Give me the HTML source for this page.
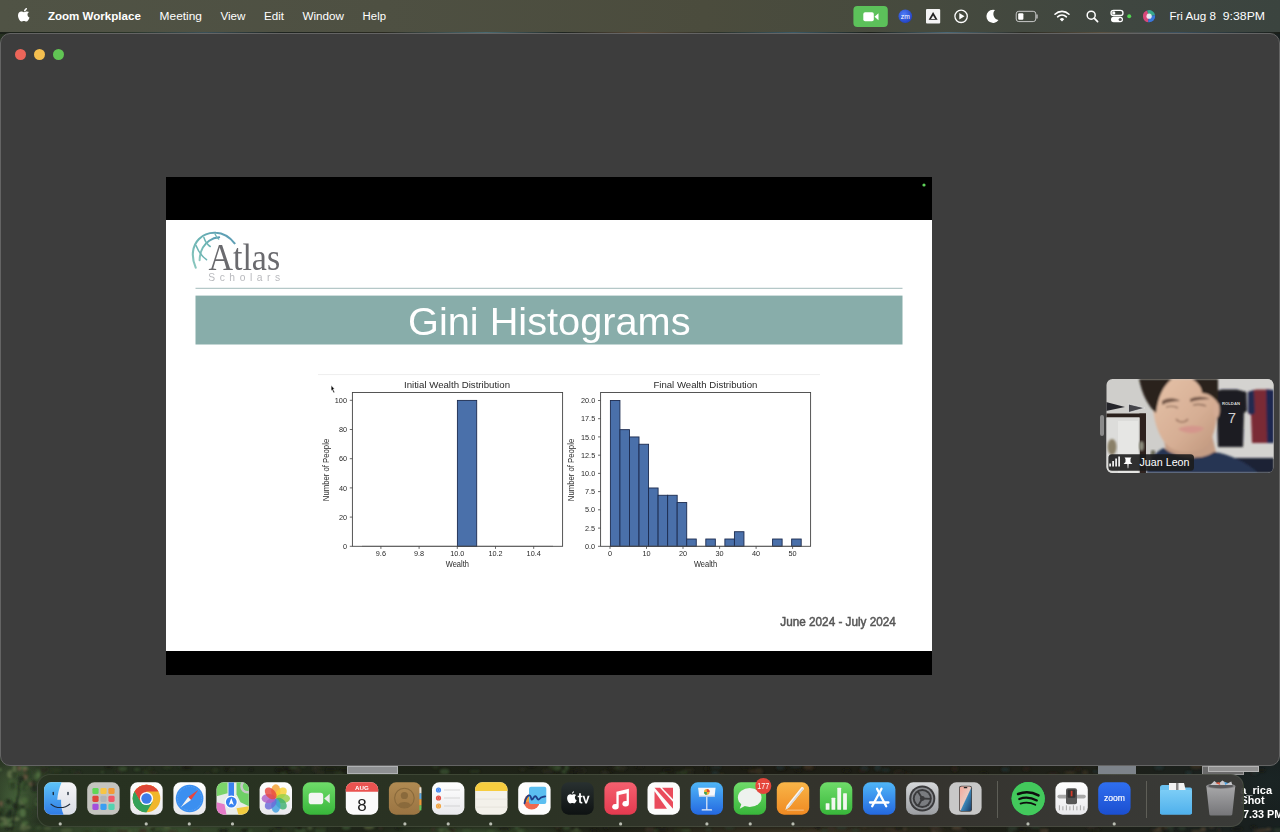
<!DOCTYPE html>
<html><head><meta charset="utf-8">
<style>
*{margin:0;padding:0;box-sizing:border-box}
html,body{width:1280px;height:832px;overflow:hidden;font-family:"Liberation Sans",sans-serif}
body{position:relative;background:#1d2618}
.abs{position:absolute}
#wall{left:0;top:0;width:1280px;height:832px;
 background:
 radial-gradient(ellipse 30px 40px at 15px 800px,#45603a 0%,rgba(60,85,50,0.6) 50%,transparent 100%),
 radial-gradient(ellipse 40px 30px at 20px 780px,#3a4a30 0%,transparent 100%),
 radial-gradient(ellipse 200px 10px at 150px 830px,#3a5030 0%,transparent 100%),
 radial-gradient(ellipse 120px 8px at 480px 832px,#34462c 0%,transparent 100%),
 radial-gradient(ellipse 200px 8px at 800px 832px,#3a3424 0%,transparent 100%),
 radial-gradient(ellipse 60px 30px at 1270px 780px,#1a2424 0%,transparent 100%),
 linear-gradient(90deg,#253020,#1e2418 30%,#1c1c14 60%,#1e2018 85%,#182020)}
#menubar{left:0;top:0;width:1280px;height:32px;background:linear-gradient(90deg,#505345 0%,#4e5042 30%,#4b4c3d 55%,#464a3e 72%,#3f4640 88%,#3b443f 100%);color:#fff;font-size:13px}
#menubar span{position:absolute;top:9px;line-height:14px;white-space:nowrap}
#win{left:0;top:33px;width:1280px;height:733px;background:#3d3d3d;border:1px solid #646464;border-radius:10px}
.tl{position:absolute;top:14.6px;width:11px;height:11px;border-radius:50%}
#slide{left:166px;top:177px;width:766px;height:498px;background:#000}
#white{left:166px;top:220px;width:766px;height:431px;background:#fff}
</style></head><body>
<div id="wall" class="abs"></div>
<svg class="abs" style="left:0;top:0" width="1280" height="832"><defs><filter id="wb"><feGaussianBlur stdDeviation="0.8"/></filter></defs><g filter="url(#wb)"><ellipse cx="9.5" cy="801.9" rx="3.8" ry="2.7" fill="#2a3a22" opacity="0.7"/><ellipse cx="23.2" cy="806.0" rx="2.7" ry="2.9" fill="#1a2418" opacity="0.7"/><ellipse cx="7.7" cy="813.3" rx="3.6" ry="2.7" fill="#3a5030" opacity="0.7"/><ellipse cx="25.6" cy="775.9" rx="1.9" ry="3.8" fill="#7a5a48" opacity="0.7"/><ellipse cx="15.6" cy="767.0" rx="1.7" ry="3.4" fill="#1a2418" opacity="0.7"/><ellipse cx="23.6" cy="785.9" rx="3.6" ry="2.2" fill="#4a6a3a" opacity="0.7"/><ellipse cx="23.8" cy="826.7" rx="3.3" ry="3.8" fill="#6a7a50" opacity="0.7"/><ellipse cx="15.8" cy="818.9" rx="3.9" ry="1.8" fill="#6a7a50" opacity="0.7"/><ellipse cx="14.6" cy="768.4" rx="2.0" ry="3.9" fill="#6a7a50" opacity="0.7"/><ellipse cx="17.4" cy="807.4" rx="2.6" ry="3.6" fill="#2a3a22" opacity="0.7"/><ellipse cx="23.0" cy="801.3" rx="3.0" ry="3.8" fill="#6a7a50" opacity="0.7"/><ellipse cx="27.3" cy="827.3" rx="2.2" ry="3.0" fill="#1a2418" opacity="0.7"/><ellipse cx="27.8" cy="812.1" rx="3.9" ry="3.8" fill="#2a3a22" opacity="0.7"/><ellipse cx="22.8" cy="813.1" rx="3.1" ry="4.0" fill="#5a7a48" opacity="0.7"/><ellipse cx="10.7" cy="774.2" rx="3.6" ry="4.0" fill="#6a7a50" opacity="0.7"/><ellipse cx="3.5" cy="818.8" rx="3.7" ry="1.6" fill="#6a7a50" opacity="0.7"/><ellipse cx="17.1" cy="793.4" rx="1.6" ry="3.0" fill="#4a6a3a" opacity="0.7"/><ellipse cx="1.8" cy="813.4" rx="2.9" ry="3.8" fill="#2a3a22" opacity="0.7"/><ellipse cx="11.2" cy="781.6" rx="2.3" ry="1.7" fill="#4a6a3a" opacity="0.7"/><ellipse cx="24.0" cy="768.1" rx="3.9" ry="2.2" fill="#5a7a48" opacity="0.7"/><ellipse cx="10.5" cy="811.5" rx="2.3" ry="2.4" fill="#1a2418" opacity="0.7"/><ellipse cx="5.5" cy="822.9" rx="2.7" ry="2.8" fill="#6a7a50" opacity="0.7"/><ellipse cx="25.8" cy="805.3" rx="1.8" ry="3.9" fill="#3a5030" opacity="0.7"/><ellipse cx="32.5" cy="783.9" rx="3.3" ry="2.1" fill="#7a5a48" opacity="0.7"/><ellipse cx="12.0" cy="830.5" rx="2.3" ry="2.3" fill="#3a5030" opacity="0.7"/><ellipse cx="31.5" cy="831.2" rx="1.6" ry="3.0" fill="#2a3a22" opacity="0.7"/><ellipse cx="25.3" cy="770.0" rx="2.3" ry="2.4" fill="#7a5a48" opacity="0.7"/><ellipse cx="36.7" cy="806.2" rx="3.3" ry="1.6" fill="#2a3a22" opacity="0.7"/><ellipse cx="2.4" cy="810.6" rx="2.1" ry="2.6" fill="#2a3a22" opacity="0.7"/><ellipse cx="23.7" cy="787.1" rx="2.0" ry="3.4" fill="#2a3a22" opacity="0.7"/><ellipse cx="33.8" cy="783.4" rx="2.4" ry="3.4" fill="#1a2418" opacity="0.7"/><ellipse cx="1.1" cy="803.6" rx="1.8" ry="2.8" fill="#7a5a48" opacity="0.7"/><ellipse cx="26.1" cy="783.8" rx="2.0" ry="2.6" fill="#2a3a22" opacity="0.7"/><ellipse cx="27.9" cy="772.7" rx="3.9" ry="3.2" fill="#2a3a22" opacity="0.7"/><ellipse cx="9.0" cy="819.4" rx="1.7" ry="3.4" fill="#5a7a48" opacity="0.7"/><ellipse cx="8.7" cy="803.5" rx="2.1" ry="1.8" fill="#2a3a22" opacity="0.7"/><ellipse cx="21.2" cy="778.6" rx="3.6" ry="2.9" fill="#1a2418" opacity="0.7"/><ellipse cx="34.5" cy="788.4" rx="3.1" ry="3.5" fill="#1a2418" opacity="0.7"/><ellipse cx="13.8" cy="774.6" rx="2.8" ry="3.6" fill="#2a3a22" opacity="0.7"/><ellipse cx="18.6" cy="807.9" rx="2.5" ry="2.5" fill="#2a3a22" opacity="0.7"/><ellipse cx="36.8" cy="776.3" rx="2.7" ry="3.6" fill="#4a6a3a" opacity="0.7"/><ellipse cx="24.9" cy="799.7" rx="3.9" ry="3.8" fill="#3a5030" opacity="0.7"/><ellipse cx="8.9" cy="815.2" rx="3.4" ry="3.4" fill="#1a2418" opacity="0.7"/><ellipse cx="38.5" cy="801.9" rx="3.7" ry="3.6" fill="#5a7a48" opacity="0.7"/><ellipse cx="38.8" cy="773.9" rx="1.6" ry="3.8" fill="#5a7a48" opacity="0.7"/><ellipse cx="27.7" cy="827.0" rx="2.9" ry="1.5" fill="#6a7a50" opacity="0.7"/><ellipse cx="29.8" cy="777.3" rx="2.1" ry="1.5" fill="#2a3a22" opacity="0.7"/><ellipse cx="21.5" cy="769.5" rx="1.8" ry="1.8" fill="#3a5030" opacity="0.7"/><ellipse cx="38.9" cy="801.7" rx="3.5" ry="2.4" fill="#1a2418" opacity="0.7"/><ellipse cx="7.9" cy="801.3" rx="1.8" ry="2.1" fill="#1a2418" opacity="0.7"/><ellipse cx="11.0" cy="824.7" rx="3.6" ry="1.5" fill="#5a7a48" opacity="0.7"/><ellipse cx="25.1" cy="822.9" rx="3.4" ry="2.1" fill="#4a6a3a" opacity="0.7"/><ellipse cx="24.7" cy="800.3" rx="2.7" ry="3.4" fill="#4a6a3a" opacity="0.7"/><ellipse cx="0.1" cy="769.6" rx="1.6" ry="1.6" fill="#5a7a48" opacity="0.7"/><ellipse cx="19.3" cy="768.2" rx="1.7" ry="2.8" fill="#7a5a48" opacity="0.7"/><ellipse cx="12.6" cy="786.8" rx="2.5" ry="2.5" fill="#2a3a22" opacity="0.7"/><ellipse cx="12.2" cy="783.5" rx="2.6" ry="1.8" fill="#2a3a22" opacity="0.7"/><ellipse cx="0.1" cy="813.7" rx="1.7" ry="1.9" fill="#1a2418" opacity="0.7"/><ellipse cx="14.9" cy="805.9" rx="2.9" ry="3.1" fill="#1a2418" opacity="0.7"/><ellipse cx="1.7" cy="824.5" rx="2.4" ry="2.7" fill="#4a6a3a" opacity="0.7"/><ellipse cx="899.7" cy="829.1" rx="3.8" ry="1.4" fill="#2a3a2a" opacity="0.8"/><ellipse cx="685.9" cy="830.5" rx="5.2" ry="1.3" fill="#3a5030" opacity="0.8"/><ellipse cx="166.9" cy="827.1" rx="3.5" ry="2.3" fill="#4a5a38" opacity="0.8"/><ellipse cx="1012.4" cy="828.3" rx="4.8" ry="2.4" fill="#2a3a2a" opacity="0.8"/><ellipse cx="936.4" cy="831.2" rx="5.2" ry="2.0" fill="#4a4030" opacity="0.8"/><ellipse cx="939.2" cy="829.8" rx="5.2" ry="2.1" fill="#2a2820" opacity="0.8"/><ellipse cx="606.1" cy="828.2" rx="2.2" ry="1.1" fill="#1a1a14" opacity="0.8"/><ellipse cx="127.1" cy="831.4" rx="5.3" ry="1.5" fill="#2a3a22" opacity="0.8"/><ellipse cx="1090.9" cy="827.1" rx="4.7" ry="2.3" fill="#2a2820" opacity="0.8"/><ellipse cx="1219.1" cy="829.9" rx="2.1" ry="2.2" fill="#2a2820" opacity="0.8"/><ellipse cx="654.5" cy="830.6" rx="4.2" ry="1.1" fill="#3a5030" opacity="0.8"/><ellipse cx="708.2" cy="829.8" rx="2.7" ry="1.1" fill="#4a4030" opacity="0.8"/><ellipse cx="1277.9" cy="830.2" rx="4.5" ry="2.1" fill="#2a3a2a" opacity="0.8"/><ellipse cx="504.0" cy="828.8" rx="5.8" ry="1.8" fill="#1a1a14" opacity="0.8"/><ellipse cx="1236.9" cy="828.9" rx="5.9" ry="1.6" fill="#1a1a14" opacity="0.8"/><ellipse cx="956.7" cy="827.8" rx="5.0" ry="2.0" fill="#4a4030" opacity="0.8"/><ellipse cx="661.9" cy="829.4" rx="5.6" ry="1.2" fill="#1a1a14" opacity="0.8"/><ellipse cx="122.7" cy="830.7" rx="5.8" ry="1.9" fill="#3a3024" opacity="0.8"/><ellipse cx="1098.4" cy="827.7" rx="2.6" ry="1.8" fill="#1a1a14" opacity="0.8"/><ellipse cx="1196.5" cy="831.3" rx="5.8" ry="1.4" fill="#4a4030" opacity="0.8"/><ellipse cx="902.8" cy="829.1" rx="4.3" ry="1.4" fill="#4a4030" opacity="0.8"/><ellipse cx="278.5" cy="827.1" rx="5.2" ry="1.3" fill="#1a1a14" opacity="0.8"/><ellipse cx="729.5" cy="828.2" rx="5.1" ry="1.2" fill="#2a3a2a" opacity="0.8"/><ellipse cx="1268.8" cy="829.4" rx="2.8" ry="1.9" fill="#4a4030" opacity="0.8"/><ellipse cx="1154.2" cy="830.3" rx="3.9" ry="2.1" fill="#2a2820" opacity="0.8"/><ellipse cx="1096.5" cy="829.0" rx="3.9" ry="1.3" fill="#2a2820" opacity="0.8"/><ellipse cx="300.5" cy="830.6" rx="5.8" ry="2.3" fill="#3a5030" opacity="0.8"/><ellipse cx="309.9" cy="827.9" rx="2.5" ry="1.9" fill="#4a5a38" opacity="0.8"/><ellipse cx="864.2" cy="827.2" rx="2.7" ry="1.1" fill="#3a3024" opacity="0.8"/><ellipse cx="234.6" cy="827.5" rx="2.5" ry="1.4" fill="#3a5030" opacity="0.8"/><ellipse cx="1169.6" cy="827.2" rx="4.3" ry="2.0" fill="#2a3a2a" opacity="0.8"/><ellipse cx="8.8" cy="828.7" rx="3.5" ry="1.1" fill="#1a1a14" opacity="0.8"/><ellipse cx="824.7" cy="830.7" rx="3.6" ry="1.8" fill="#2a3a2a" opacity="0.8"/><ellipse cx="152.5" cy="828.4" rx="2.5" ry="2.3" fill="#1a1a14" opacity="0.8"/><ellipse cx="1163.2" cy="827.5" rx="4.7" ry="1.6" fill="#3a3024" opacity="0.8"/><ellipse cx="576.5" cy="830.3" rx="2.4" ry="2.4" fill="#4a5a38" opacity="0.8"/><ellipse cx="433.3" cy="829.8" rx="2.5" ry="1.7" fill="#3a3024" opacity="0.8"/><ellipse cx="450.8" cy="830.6" rx="5.0" ry="2.0" fill="#3a3024" opacity="0.8"/><ellipse cx="934.7" cy="827.7" rx="5.6" ry="2.0" fill="#3a3024" opacity="0.8"/><ellipse cx="157.6" cy="831.7" rx="5.7" ry="2.0" fill="#2a3a22" opacity="0.8"/><ellipse cx="831.5" cy="829.1" rx="4.6" ry="1.7" fill="#3a3024" opacity="0.8"/><ellipse cx="399.9" cy="827.9" rx="2.4" ry="1.3" fill="#3a5030" opacity="0.8"/><ellipse cx="708.8" cy="829.9" rx="3.4" ry="1.4" fill="#2a3a2a" opacity="0.8"/><ellipse cx="490.7" cy="831.4" rx="3.9" ry="1.4" fill="#3a5030" opacity="0.8"/><ellipse cx="890.2" cy="829.6" rx="5.8" ry="1.7" fill="#3a3024" opacity="0.8"/><ellipse cx="1035.7" cy="827.3" rx="5.4" ry="1.2" fill="#2a3a2a" opacity="0.8"/><ellipse cx="346.2" cy="827.5" rx="4.3" ry="2.4" fill="#3a5030" opacity="0.8"/><ellipse cx="143.5" cy="830.5" rx="3.7" ry="2.1" fill="#3a3024" opacity="0.8"/><ellipse cx="1044.2" cy="830.7" rx="4.4" ry="2.3" fill="#4a4030" opacity="0.8"/><ellipse cx="1021.7" cy="829.7" rx="4.3" ry="1.3" fill="#1a1a14" opacity="0.8"/><ellipse cx="320.2" cy="830.9" rx="5.4" ry="1.7" fill="#3a5030" opacity="0.8"/><ellipse cx="521.3" cy="831.1" rx="4.2" ry="1.9" fill="#4a5a38" opacity="0.8"/><ellipse cx="811.1" cy="831.9" rx="5.6" ry="2.0" fill="#3a3024" opacity="0.8"/><ellipse cx="38.6" cy="828.0" rx="2.4" ry="2.1" fill="#3a5030" opacity="0.8"/><ellipse cx="299.3" cy="827.9" rx="2.8" ry="2.2" fill="#1a1a14" opacity="0.8"/><ellipse cx="271.2" cy="831.1" rx="2.4" ry="1.4" fill="#1a1a14" opacity="0.8"/><ellipse cx="841.6" cy="827.8" rx="5.2" ry="1.9" fill="#2a3a2a" opacity="0.8"/><ellipse cx="64.8" cy="828.8" rx="4.0" ry="1.7" fill="#2a3a22" opacity="0.8"/><ellipse cx="24.2" cy="828.7" rx="5.5" ry="2.0" fill="#4a5a38" opacity="0.8"/><ellipse cx="172.0" cy="831.3" rx="5.1" ry="1.1" fill="#3a3024" opacity="0.8"/><ellipse cx="102.4" cy="832.0" rx="5.7" ry="2.3" fill="#2a3a22" opacity="0.8"/><ellipse cx="559.4" cy="830.8" rx="3.3" ry="2.2" fill="#1a1a14" opacity="0.8"/><ellipse cx="522.8" cy="831.2" rx="3.6" ry="1.7" fill="#2a3a22" opacity="0.8"/><ellipse cx="87.0" cy="831.3" rx="4.6" ry="1.5" fill="#2a3a22" opacity="0.8"/><ellipse cx="594.4" cy="830.8" rx="3.8" ry="1.7" fill="#1a1a14" opacity="0.8"/><ellipse cx="47.7" cy="828.3" rx="3.8" ry="1.5" fill="#4a5a38" opacity="0.8"/><ellipse cx="514.3" cy="831.8" rx="3.0" ry="1.6" fill="#2a3a22" opacity="0.8"/><ellipse cx="1094.9" cy="829.7" rx="2.8" ry="1.3" fill="#1a1a14" opacity="0.8"/><ellipse cx="516.8" cy="827.8" rx="2.6" ry="1.9" fill="#3a5030" opacity="0.8"/><ellipse cx="566.7" cy="827.9" rx="3.6" ry="1.5" fill="#3a5030" opacity="0.8"/><ellipse cx="42.0" cy="830.6" rx="3.6" ry="1.6" fill="#2a3a22" opacity="0.8"/><ellipse cx="34.1" cy="831.8" rx="3.0" ry="1.6" fill="#2a3a22" opacity="0.8"/><ellipse cx="244.0" cy="828.7" rx="3.4" ry="1.2" fill="#3a5030" opacity="0.8"/><ellipse cx="66.4" cy="830.6" rx="5.9" ry="2.4" fill="#4a5a38" opacity="0.8"/><ellipse cx="1010.3" cy="831.8" rx="3.0" ry="1.4" fill="#2a3a2a" opacity="0.8"/><ellipse cx="1042.8" cy="830.1" rx="3.3" ry="1.1" fill="#3a3024" opacity="0.8"/><ellipse cx="557.3" cy="827.4" rx="2.0" ry="1.0" fill="#3a3024" opacity="0.8"/><ellipse cx="115.9" cy="827.9" rx="3.9" ry="1.3" fill="#3a5030" opacity="0.8"/><ellipse cx="652.5" cy="828.7" rx="3.4" ry="1.7" fill="#1a1a14" opacity="0.8"/><ellipse cx="450.0" cy="830.3" rx="3.2" ry="1.9" fill="#1a1a14" opacity="0.8"/><ellipse cx="1211.6" cy="827.4" rx="2.7" ry="1.6" fill="#3a3024" opacity="0.8"/><ellipse cx="649.6" cy="829.7" rx="4.7" ry="2.4" fill="#3a3024" opacity="0.8"/><ellipse cx="223.5" cy="830.7" rx="5.3" ry="1.8" fill="#1a1a14" opacity="0.8"/><ellipse cx="1182.1" cy="828.8" rx="3.8" ry="1.7" fill="#2a3a2a" opacity="0.8"/><ellipse cx="899.5" cy="828.7" rx="4.0" ry="2.1" fill="#1a1a14" opacity="0.8"/><ellipse cx="1171.3" cy="830.5" rx="2.2" ry="1.3" fill="#2a3a2a" opacity="0.8"/><ellipse cx="962.1" cy="831.1" rx="5.0" ry="2.0" fill="#2a2820" opacity="0.8"/><ellipse cx="124.3" cy="828.2" rx="5.5" ry="2.3" fill="#3a5030" opacity="0.8"/><ellipse cx="575.9" cy="831.5" rx="6.0" ry="1.0" fill="#4a5a38" opacity="0.8"/><ellipse cx="249.4" cy="830.9" rx="3.4" ry="1.5" fill="#3a5030" opacity="0.8"/><ellipse cx="576.4" cy="831.1" rx="3.0" ry="1.1" fill="#2a3a22" opacity="0.8"/><ellipse cx="195.4" cy="830.2" rx="5.9" ry="1.2" fill="#3a3024" opacity="0.8"/><ellipse cx="368.0" cy="828.0" rx="4.1" ry="1.8" fill="#3a3024" opacity="0.8"/><ellipse cx="1161.2" cy="828.6" rx="5.1" ry="1.7" fill="#4a4030" opacity="0.8"/><ellipse cx="796.7" cy="827.2" rx="4.4" ry="2.3" fill="#2a2820" opacity="0.8"/><ellipse cx="129.8" cy="831.7" rx="2.3" ry="1.7" fill="#4a5a38" opacity="0.8"/><ellipse cx="285.1" cy="831.1" rx="2.4" ry="1.7" fill="#3a3024" opacity="0.8"/><ellipse cx="855.7" cy="830.5" rx="4.4" ry="1.7" fill="#2a3a2a" opacity="0.8"/><ellipse cx="142.0" cy="831.2" rx="3.8" ry="1.6" fill="#3a3024" opacity="0.8"/><ellipse cx="149.7" cy="827.0" rx="4.9" ry="1.1" fill="#4a5a38" opacity="0.8"/><ellipse cx="443.1" cy="829.4" rx="5.7" ry="2.0" fill="#3a5030" opacity="0.8"/><ellipse cx="466.7" cy="830.9" rx="4.4" ry="1.3" fill="#3a5030" opacity="0.8"/><ellipse cx="448.7" cy="832.0" rx="2.9" ry="1.7" fill="#4a5a38" opacity="0.8"/><ellipse cx="321.2" cy="828.6" rx="4.9" ry="2.3" fill="#2a3a22" opacity="0.8"/><ellipse cx="1262.8" cy="830.1" rx="5.4" ry="1.6" fill="#4a4030" opacity="0.8"/><ellipse cx="244.7" cy="830.1" rx="3.9" ry="2.2" fill="#1a1a14" opacity="0.8"/><ellipse cx="520.9" cy="832.0" rx="3.2" ry="2.4" fill="#3a5030" opacity="0.8"/><ellipse cx="236.3" cy="827.5" rx="3.2" ry="1.8" fill="#2a3a22" opacity="0.8"/><ellipse cx="818.2" cy="827.2" rx="3.1" ry="1.6" fill="#1a1a14" opacity="0.8"/><ellipse cx="441.3" cy="830.7" rx="2.6" ry="1.7" fill="#4a5a38" opacity="0.8"/><ellipse cx="1162.8" cy="829.2" rx="2.6" ry="2.1" fill="#1a1a14" opacity="0.8"/><ellipse cx="896.5" cy="831.9" rx="5.8" ry="1.6" fill="#3a3024" opacity="0.8"/><ellipse cx="1203.2" cy="829.4" rx="2.9" ry="2.4" fill="#4a4030" opacity="0.8"/><ellipse cx="369.2" cy="827.1" rx="5.5" ry="2.2" fill="#4a5a38" opacity="0.8"/><ellipse cx="380.7" cy="828.2" rx="2.0" ry="1.2" fill="#3a3024" opacity="0.8"/><ellipse cx="679.5" cy="829.7" rx="5.8" ry="1.0" fill="#2a3a22" opacity="0.8"/><ellipse cx="1259.1" cy="831.0" rx="5.9" ry="2.2" fill="#3a3024" opacity="0.8"/><ellipse cx="1253.4" cy="827.2" rx="3.0" ry="1.4" fill="#1a1a14" opacity="0.8"/><ellipse cx="1157.7" cy="831.2" rx="4.2" ry="1.1" fill="#4a4030" opacity="0.8"/><ellipse cx="398.9" cy="828.2" rx="3.7" ry="1.4" fill="#1a1a14" opacity="0.8"/><ellipse cx="56.3" cy="769.9" rx="5.7" ry="2.6" fill="#2a3a22" opacity="0.8"/><ellipse cx="316.6" cy="767.2" rx="4.0" ry="2.7" fill="#2a2a20" opacity="0.8"/><ellipse cx="706.4" cy="768.5" rx="2.2" ry="2.0" fill="#1a1a14" opacity="0.8"/><ellipse cx="77.3" cy="773.3" rx="3.9" ry="2.3" fill="#2a2a20" opacity="0.8"/><ellipse cx="1188.6" cy="773.3" rx="3.5" ry="2.3" fill="#223030" opacity="0.8"/><ellipse cx="376.0" cy="766.7" rx="6.0" ry="2.1" fill="#2a3a22" opacity="0.8"/><ellipse cx="522.4" cy="769.2" rx="3.1" ry="1.5" fill="#2a2a20" opacity="0.8"/><ellipse cx="362.3" cy="770.8" rx="2.6" ry="1.1" fill="#1a1a14" opacity="0.8"/><ellipse cx="621.5" cy="768.1" rx="5.7" ry="2.2" fill="#2a2a20" opacity="0.8"/><ellipse cx="39.2" cy="771.2" rx="4.0" ry="1.6" fill="#3a5030" opacity="0.8"/><ellipse cx="908.0" cy="774.2" rx="3.7" ry="1.2" fill="#2a2218" opacity="0.8"/><ellipse cx="43.1" cy="770.4" rx="2.8" ry="2.8" fill="#2a2a20" opacity="0.8"/><ellipse cx="231.8" cy="769.4" rx="3.3" ry="1.5" fill="#2a2a20" opacity="0.8"/><ellipse cx="1215.9" cy="774.5" rx="4.4" ry="2.1" fill="#3a2e22" opacity="0.8"/><ellipse cx="45.5" cy="769.8" rx="5.9" ry="1.2" fill="#2a2a20" opacity="0.8"/><ellipse cx="294.1" cy="767.8" rx="4.8" ry="1.2" fill="#3a5030" opacity="0.8"/><ellipse cx="809.3" cy="767.1" rx="5.8" ry="2.9" fill="#2a2218" opacity="0.8"/><ellipse cx="885.8" cy="769.9" rx="3.8" ry="1.6" fill="#223030" opacity="0.8"/><ellipse cx="716.2" cy="767.6" rx="5.8" ry="1.3" fill="#223030" opacity="0.8"/><ellipse cx="1159.0" cy="767.6" rx="4.7" ry="2.3" fill="#223030" opacity="0.8"/><ellipse cx="182.0" cy="766.5" rx="3.2" ry="2.3" fill="#2a3a22" opacity="0.8"/><ellipse cx="167.4" cy="767.3" rx="4.1" ry="1.8" fill="#2a3a22" opacity="0.8"/><ellipse cx="137.0" cy="769.5" rx="3.1" ry="1.3" fill="#3a5030" opacity="0.8"/><ellipse cx="185.9" cy="767.1" rx="5.8" ry="2.2" fill="#1a1a14" opacity="0.8"/><ellipse cx="1196.2" cy="766.1" rx="6.0" ry="3.0" fill="#3a2e22" opacity="0.8"/><ellipse cx="314.8" cy="769.2" rx="2.4" ry="2.7" fill="#2a2a20" opacity="0.8"/><ellipse cx="605.1" cy="772.7" rx="4.3" ry="1.9" fill="#2a2a20" opacity="0.8"/><ellipse cx="688.8" cy="770.0" rx="5.3" ry="1.4" fill="#2a2a20" opacity="0.8"/><ellipse cx="760.7" cy="774.4" rx="3.2" ry="2.7" fill="#1a1a14" opacity="0.8"/><ellipse cx="1227.6" cy="768.9" rx="2.5" ry="2.2" fill="#1a1a14" opacity="0.8"/><ellipse cx="72.9" cy="771.5" rx="2.5" ry="1.0" fill="#2a3a22" opacity="0.8"/><ellipse cx="1113.3" cy="773.1" rx="4.1" ry="2.5" fill="#3a2e22" opacity="0.8"/><ellipse cx="118.4" cy="770.9" rx="3.3" ry="2.2" fill="#2a2a20" opacity="0.8"/><ellipse cx="279.7" cy="770.1" rx="4.5" ry="2.2" fill="#1a1a14" opacity="0.8"/><ellipse cx="899.2" cy="772.9" rx="5.4" ry="2.7" fill="#3a2e22" opacity="0.8"/><ellipse cx="367.1" cy="774.8" rx="2.7" ry="2.2" fill="#1a1a14" opacity="0.8"/><ellipse cx="283.3" cy="775.0" rx="3.1" ry="2.9" fill="#2a3a22" opacity="0.8"/><ellipse cx="579.7" cy="770.3" rx="5.9" ry="2.1" fill="#2a3a22" opacity="0.8"/><ellipse cx="565.2" cy="771.6" rx="3.7" ry="2.1" fill="#3a5030" opacity="0.8"/><ellipse cx="781.5" cy="768.6" rx="5.4" ry="1.8" fill="#1a1a14" opacity="0.8"/><ellipse cx="1256.0" cy="769.3" rx="2.2" ry="2.0" fill="#1a1a14" opacity="0.8"/><ellipse cx="150.6" cy="772.6" rx="4.8" ry="1.7" fill="#2a2a20" opacity="0.8"/><ellipse cx="384.8" cy="770.5" rx="3.8" ry="2.8" fill="#2a2a20" opacity="0.8"/><ellipse cx="877.2" cy="766.9" rx="2.6" ry="1.4" fill="#223030" opacity="0.8"/><ellipse cx="474.8" cy="771.5" rx="5.5" ry="1.4" fill="#2a3a22" opacity="0.8"/><ellipse cx="557.0" cy="767.8" rx="4.2" ry="2.8" fill="#3a5030" opacity="0.8"/><ellipse cx="684.0" cy="772.6" rx="3.8" ry="2.4" fill="#2a3a22" opacity="0.8"/><ellipse cx="154.5" cy="773.9" rx="2.9" ry="1.3" fill="#2a2a20" opacity="0.8"/><ellipse cx="392.5" cy="771.0" rx="5.3" ry="2.2" fill="#3a5030" opacity="0.8"/><ellipse cx="108.6" cy="766.3" rx="3.5" ry="2.0" fill="#1a1a14" opacity="0.8"/><ellipse cx="1261.6" cy="770.3" rx="3.6" ry="2.0" fill="#1a1a14" opacity="0.8"/><ellipse cx="553.4" cy="771.7" rx="3.7" ry="1.2" fill="#1a1a14" opacity="0.8"/><ellipse cx="1253.3" cy="772.2" rx="2.3" ry="2.8" fill="#2a2218" opacity="0.8"/><ellipse cx="954.9" cy="768.9" rx="3.3" ry="2.8" fill="#2a2218" opacity="0.8"/><ellipse cx="808.1" cy="766.8" rx="4.6" ry="2.8" fill="#3a2e22" opacity="0.8"/><ellipse cx="289.3" cy="768.9" rx="5.8" ry="1.1" fill="#2a2a20" opacity="0.8"/><ellipse cx="663.1" cy="774.1" rx="4.3" ry="1.2" fill="#2a3a22" opacity="0.8"/><ellipse cx="297.3" cy="770.2" rx="3.1" ry="3.0" fill="#2a2a20" opacity="0.8"/><ellipse cx="846.7" cy="770.8" rx="4.3" ry="1.7" fill="#1a1a14" opacity="0.8"/><ellipse cx="752.7" cy="771.2" rx="4.5" ry="1.7" fill="#3a2e22" opacity="0.8"/><ellipse cx="983.9" cy="774.2" rx="3.8" ry="2.4" fill="#1a1a14" opacity="0.8"/><ellipse cx="1097.9" cy="771.7" rx="5.5" ry="1.4" fill="#223030" opacity="0.8"/><ellipse cx="1053.1" cy="774.4" rx="5.7" ry="2.0" fill="#2a2218" opacity="0.8"/><ellipse cx="1078.0" cy="768.8" rx="3.3" ry="1.5" fill="#2a2218" opacity="0.8"/><ellipse cx="1126.5" cy="772.1" rx="2.9" ry="1.7" fill="#2a2218" opacity="0.8"/><ellipse cx="286.0" cy="768.6" rx="3.1" ry="2.4" fill="#1a1a14" opacity="0.8"/><ellipse cx="435.5" cy="767.0" rx="3.2" ry="1.3" fill="#2a3a22" opacity="0.8"/><ellipse cx="215.4" cy="770.3" rx="2.9" ry="2.3" fill="#2a3a22" opacity="0.8"/><ellipse cx="780.0" cy="767.6" rx="4.4" ry="1.8" fill="#223030" opacity="0.8"/><ellipse cx="226.9" cy="768.7" rx="2.2" ry="2.6" fill="#1a1a14" opacity="0.8"/><ellipse cx="1100.3" cy="770.4" rx="3.1" ry="2.8" fill="#1a1a14" opacity="0.8"/><ellipse cx="877.7" cy="768.0" rx="3.4" ry="3.0" fill="#223030" opacity="0.8"/><ellipse cx="618.4" cy="767.6" rx="3.4" ry="2.5" fill="#2a2a20" opacity="0.8"/><ellipse cx="746.8" cy="767.0" rx="5.4" ry="2.0" fill="#1a1a14" opacity="0.8"/><ellipse cx="690.3" cy="773.8" rx="3.5" ry="1.1" fill="#2a2a20" opacity="0.8"/><ellipse cx="444.6" cy="771.7" rx="4.8" ry="3.0" fill="#3a5030" opacity="0.8"/><ellipse cx="758.9" cy="771.3" rx="4.2" ry="3.0" fill="#3a2e22" opacity="0.8"/><ellipse cx="1070.0" cy="772.7" rx="5.7" ry="1.8" fill="#3a2e22" opacity="0.8"/><ellipse cx="715.1" cy="772.9" rx="3.9" ry="2.1" fill="#223030" opacity="0.8"/><ellipse cx="319.8" cy="772.3" rx="4.9" ry="1.6" fill="#2a2a20" opacity="0.8"/><ellipse cx="207.5" cy="774.2" rx="2.7" ry="1.8" fill="#2a2a20" opacity="0.8"/><ellipse cx="251.2" cy="769.7" rx="2.4" ry="1.1" fill="#1a1a14" opacity="0.8"/><ellipse cx="617.3" cy="767.8" rx="2.5" ry="2.1" fill="#2a3a22" opacity="0.8"/><ellipse cx="150.1" cy="769.5" rx="3.6" ry="1.1" fill="#1a1a14" opacity="0.8"/><ellipse cx="353.7" cy="768.8" rx="2.5" ry="2.9" fill="#1a1a14" opacity="0.8"/><ellipse cx="610.2" cy="769.9" rx="3.5" ry="2.4" fill="#1a1a14" opacity="0.8"/><ellipse cx="338.8" cy="773.0" rx="4.7" ry="1.5" fill="#2a3a22" opacity="0.8"/><ellipse cx="330.7" cy="769.1" rx="5.6" ry="1.2" fill="#1a1a14" opacity="0.8"/><ellipse cx="900.5" cy="772.8" rx="5.9" ry="1.7" fill="#1a1a14" opacity="0.8"/><ellipse cx="147.0" cy="773.5" rx="2.7" ry="2.3" fill="#2a3a22" opacity="0.8"/><ellipse cx="344.9" cy="770.6" rx="5.6" ry="1.9" fill="#1a1a14" opacity="0.8"/><ellipse cx="548.0" cy="771.1" rx="5.9" ry="1.9" fill="#2a2a20" opacity="0.8"/><ellipse cx="378.0" cy="768.5" rx="2.6" ry="1.1" fill="#2a2a20" opacity="0.8"/><ellipse cx="552.2" cy="766.0" rx="4.0" ry="2.9" fill="#2a3a22" opacity="0.8"/><ellipse cx="1085.2" cy="772.5" rx="3.0" ry="2.3" fill="#3a2e22" opacity="0.8"/><ellipse cx="721.5" cy="774.7" rx="2.8" ry="1.3" fill="#3a2e22" opacity="0.8"/><ellipse cx="1255.0" cy="772.7" rx="3.7" ry="1.6" fill="#223030" opacity="0.8"/><ellipse cx="149.4" cy="769.0" rx="3.0" ry="1.2" fill="#2a3a22" opacity="0.8"/><ellipse cx="102.3" cy="772.1" rx="2.0" ry="1.2" fill="#3a5030" opacity="0.8"/><ellipse cx="1005.1" cy="769.5" rx="4.2" ry="2.3" fill="#223030" opacity="0.8"/><ellipse cx="566.7" cy="767.6" rx="2.3" ry="2.4" fill="#3a5030" opacity="0.8"/><ellipse cx="531.6" cy="766.1" rx="4.1" ry="1.7" fill="#1a1a14" opacity="0.8"/><ellipse cx="1243.1" cy="766.9" rx="3.6" ry="2.6" fill="#1a1a14" opacity="0.8"/><ellipse cx="569.7" cy="772.0" rx="4.5" ry="1.9" fill="#1a1a14" opacity="0.8"/><ellipse cx="302.8" cy="766.1" rx="2.9" ry="1.8" fill="#2a3a22" opacity="0.8"/><ellipse cx="122.7" cy="768.8" rx="4.2" ry="2.2" fill="#3a5030" opacity="0.8"/><ellipse cx="371.2" cy="766.2" rx="4.4" ry="1.4" fill="#3a5030" opacity="0.8"/><ellipse cx="581.3" cy="770.6" rx="4.6" ry="2.5" fill="#2a2a20" opacity="0.8"/><ellipse cx="667.7" cy="769.8" rx="5.2" ry="1.4" fill="#1a1a14" opacity="0.8"/><ellipse cx="578.6" cy="770.8" rx="5.7" ry="2.2" fill="#1a1a14" opacity="0.8"/><ellipse cx="798.2" cy="769.9" rx="3.2" ry="2.0" fill="#1a1a14" opacity="0.8"/><ellipse cx="289.2" cy="770.7" rx="2.5" ry="2.0" fill="#1a1a14" opacity="0.8"/><ellipse cx="614.0" cy="768.2" rx="2.1" ry="1.0" fill="#2a2a20" opacity="0.8"/><ellipse cx="795.5" cy="766.5" rx="5.6" ry="1.1" fill="#223030" opacity="0.8"/><ellipse cx="864.3" cy="768.7" rx="4.0" ry="2.6" fill="#223030" opacity="0.8"/><ellipse cx="1026.3" cy="768.8" rx="3.6" ry="2.3" fill="#2a2218" opacity="0.8"/><ellipse cx="145.5" cy="772.1" rx="2.3" ry="2.5" fill="#2a3a22" opacity="0.8"/><ellipse cx="679.5" cy="772.9" rx="4.5" ry="1.2" fill="#2a3a22" opacity="0.8"/><ellipse cx="862.5" cy="770.6" rx="4.0" ry="1.7" fill="#2a2218" opacity="0.8"/><ellipse cx="639.7" cy="766.8" rx="4.2" ry="1.8" fill="#1a1a14" opacity="0.8"/><path d="M20,780 C18,800 14,815 12,832" stroke="#1a2016" stroke-width="2" fill="none" opacity="0.8"/></g></svg>
<div class="abs" style="left:0;top:32px;width:1280px;height:1.5px;background:linear-gradient(90deg,#1a2018 0%,#2a3428 10%,#3a5058 16%,#1e2420 22%,#2a2a20 30%,#4a6a72 38%,#1e2420 44%,#5a4a38 50%,#2a3028 56%,#3a5a68 62%,#1a1e18 68%,#4a6878 74%,#2a2a22 80%,#5a5040 86%,#3a5060 92%,#1a1e18 100%)"></div>
<div id="menubar" class="abs">
 <svg style="position:absolute;left:17.5px;top:8.3px" width="12" height="14" viewBox="0 0 12 14"><path d="M5.9,3.4 C6.8,3.4 7.8,2.8 8.3,2.1 C8.8,1.4 9,0.7 9,0 C8.2,0 7.3,0.5 6.7,1.2 C6.2,1.8 5.8,2.6 5.9,3.4 Z M8.9,3.5 C7.6,3.5 6.9,4.2 6,4.2 C5.1,4.2 4.3,3.5 3.3,3.5 C1.6,3.5 0,4.9 0,7.6 C0,10.3 2,13.6 3.4,13.6 C4.3,13.6 4.8,13 5.9,13 C7,13 7.3,13.6 8.4,13.6 C9.6,13.6 10.9,11.5 11.5,9.6 C10.1,9 9.5,7.9 9.5,6.6 C9.5,5.4 10.2,4.4 11.1,3.9 C10.4,3.8 9.7,3.5 8.9,3.5 Z" fill="#fff"/></svg><svg class="abs" style="left:0;top:0" width="1280" height="32">
<defs><radialGradient id="siri" cx="0.5" cy="0.5" r="0.5"><stop offset="0" stop-color="#e8e8f0"/><stop offset="0.45" stop-color="#7a5ad0"/><stop offset="0.8" stop-color="#3a6ad8"/><stop offset="1" stop-color="#c84a9a"/></radialGradient>
<radialGradient id="zm" cx="0.4" cy="0.35" r="0.7"><stop offset="0" stop-color="#4f7cf8"/><stop offset="1" stop-color="#1f3fc0"/></radialGradient></defs>
<rect x="853.4" y="6" width="34.4" height="21" rx="4" fill="#5cc15a"/>
<rect x="863.3" y="12.3" width="10.5" height="9" rx="1.8" fill="#fff"/><path d="M874.5,16.8 L878.5,13.3 L878.5,20.3 Z" fill="#fff"/>
<circle cx="905.3" cy="16.3" r="6.8" fill="url(#zm)"/>
<text x="905.3" y="18.6" text-anchor="middle" font-family="Liberation Sans" font-size="6.5" fill="#fff" textLength="9" lengthAdjust="spacingAndGlyphs">zm</text>
<rect x="926" y="9" width="14.2" height="14.5" rx="1" fill="#f4f4f4"/>
<path d="M933.1,12 L937.6,19.8 L928.6,19.8 Z" fill="#222"/><path d="M933.1,15.5 L935.2,19 L931,19 Z" fill="#f4f4f4"/>
<circle cx="961.1" cy="16.3" r="6.2" fill="none" stroke="#fff" stroke-width="1.3"/><path d="M959.3,13 L964.5,16.3 L959.3,19.6 Z" fill="#fff"/>
<path d="M995,10 A6.6,6.6 0 1 0 998.5,20 A6,6 0 0 1 995,10 Z" fill="#fff"/>
<rect x="1016.2" y="11.3" width="19.6" height="10.3" rx="2.6" fill="none" stroke="#c8c8c8" stroke-width="1"/><rect x="1018.2" y="13.2" width="5.2" height="6.5" rx="1" fill="#fff"/><path d="M1037,14.5 L1037,18.5" stroke="#c8c8c8" stroke-width="1.3"/>
<g fill="none" stroke="#fff" stroke-width="1.6" stroke-linecap="round"><path d="M1055,14.2 A10,10 0 0 1 1069,14.2"/><path d="M1057.6,16.8 A6.4,6.4 0 0 1 1066.4,16.8"/></g><path d="M1059.8,19.2 A3,3 0 0 1 1064.2,19.2 L1062,21.6 Z" fill="#fff"/>
<circle cx="1091.2" cy="15.2" r="4" fill="none" stroke="#fff" stroke-width="1.5"/><path d="M1094.2,18.2 L1097.6,21.6" stroke="#fff" stroke-width="1.7" stroke-linecap="round"/>
<rect x="1111" y="10.3" width="12" height="5.2" rx="2.6" fill="none" stroke="#fff" stroke-width="1.3"/><circle cx="1113.8" cy="12.9" r="1.6" fill="#fff"/>
<rect x="1111" y="16.8" width="12" height="5.4" rx="2.7" fill="#fff"/><circle cx="1120.2" cy="19.5" r="1.6" fill="#555"/>
<circle cx="1129.2" cy="16.3" r="2" fill="#52d452"/>
<g transform="translate(1149.1,16.2)"><circle r="6.1" fill="#3a3a70"/><path d="M0,0 L-2,-5.8 A6.1,6.1 0 0 0 -1,6 Z" fill="#d8487a"/><path d="M0,0 L-2,-5.8 A6.1,6.1 0 0 1 6,-1 Z" fill="#38a88a"/><path d="M0,0 L6,-1 A6.1,6.1 0 0 1 -1,6 Z" fill="#3a78d8"/><circle r="2.6" fill="#f4f4f8" opacity="0.9"/></g>
</svg>
<svg class="abs" style="left:0;top:0" width="1280" height="32"><g font-family="Liberation Sans" fill="#fff" font-size="11.7">
<text x="47.9" y="20.2" font-weight="bold" textLength="93" lengthAdjust="spacingAndGlyphs">Zoom Workplace</text>
<text x="159.6" y="20.2" textLength="42.4" lengthAdjust="spacingAndGlyphs">Meeting</text>
<text x="220.4" y="20.2" textLength="25" lengthAdjust="spacingAndGlyphs">View</text>
<text x="264" y="20.2" textLength="20" lengthAdjust="spacingAndGlyphs">Edit</text>
<text x="302.4" y="20.2" textLength="41.6" lengthAdjust="spacingAndGlyphs">Window</text>
<text x="362.6" y="20.2" textLength="23.4" lengthAdjust="spacingAndGlyphs">Help</text>
<text x="1169.4" y="20.2" textLength="46.5" lengthAdjust="spacingAndGlyphs">Fri Aug 8</text>
<text x="1222.8" y="20.2" textLength="42.2" lengthAdjust="spacingAndGlyphs">9:38PM</text>
</g></svg>
</div>
<div class="abs" style="left:347px;top:766px;width:51px;height:8px;background:#8e9092;border:1px solid #b0b2b4"></div>
<div class="abs" style="left:1098px;top:766px;width:38px;height:8px;background:#7d838a"></div>
<div class="abs" style="left:1202px;top:766px;width:42px;height:9px;background:#6a6a6a;border:1px solid #999"></div>
<div class="abs" style="left:1208px;top:766px;width:51px;height:6px;background:#909090;border:1px solid #b5b5b5"></div>
<div class="abs" style="right:8px;top:784px;color:#fff;font-size:11px;font-weight:bold;line-height:12px;white-space:nowrap;text-align:right">a_rica</div>
<div class="abs" style="right:15.5px;top:794px;color:#fff;font-size:10.8px;font-weight:bold;line-height:12px;white-space:nowrap;text-align:right">Shot</div>
<div class="abs" style="left:1243px;top:808px;color:#fff;font-size:10.8px;font-weight:bold;line-height:12px;white-space:nowrap">7.33 PM</div>
<div id="win" class="abs">
 <div class="tl" style="left:14px;background:#ec6559"></div>
 <div class="tl" style="left:33px;background:#f4bf4f"></div>
 <div class="tl" style="left:52px;background:#61c554"></div>
</div>
<div id="slide" class="abs"></div>
<div id="white" class="abs"></div>
<div class="abs" style="left:1100px;top:415px;width:4px;height:21px;border-radius:2px;background:#8a8a8a"></div>
<svg class="abs" style="left:1105.5px;top:379px" width="168" height="94" viewBox="0 0 168 94">
<defs><clipPath id="vc"><rect x="0.5" y="0" width="167" height="94" rx="6"/></clipPath>
<linearGradient id="face" x1="0" y1="0" x2="1" y2="1"><stop offset="0" stop-color="#e6c2a8"/><stop offset="0.6" stop-color="#d6ae94"/><stop offset="1" stop-color="#bf967c"/></linearGradient>
<filter id="bl" x="-10%" y="-10%" width="120%" height="120%"><feGaussianBlur stdDeviation="1"/></filter></defs>
<g clip-path="url(#vc)">
<rect x="0" y="0" width="168" height="94" fill="#cfcecb"/>
<rect x="105" y="0" width="63" height="80" fill="#d4d3d0"/>
<path d="M0,23 L19,28 L0,32 Z" fill="#25252a"/>
<path d="M22.5,25 L39,29 L22.5,33.5 Z" fill="#45454a" stroke="#e8e8e8" stroke-width="0.7"/>
<rect x="0" y="34.5" width="40" height="4" fill="#2a201c"/>
<rect x="33.5" y="34.5" width="6.5" height="60" fill="#2e221e"/>
<rect x="0" y="38.5" width="33.5" height="56" fill="#dcdcda"/>
<rect x="12" y="42" width="20" height="52" fill="#e6e6e4"/>
<ellipse cx="6" cy="68" rx="4.5" ry="8" fill="#8a8068" filter="url(#bl)"/>
<ellipse cx="35.5" cy="67" rx="2.5" ry="5" fill="#8a8a7a" filter="url(#bl)"/>
<ellipse cx="47" cy="76" rx="2.5" ry="5" fill="#6a6a58" filter="url(#bl)"/>
<g filter="url(#bl)">
<path d="M109.5,12 L116,10.5 L131,10.5 L140.5,13 L141,32 L138,34 L137,68 L112,68 L111,34 L109,33 Z" fill="#1c1c24"/>
<path d="M142,13 L150,10.5 L164,10.5 L168,12 L168,64 L146,64 L145,36 L142,34 Z" fill="#7a2a34"/>
<path d="M142,13 L148,11 L149,34 L146,36 L142,34 Z" fill="#222a50"/>
<path d="M160,10.5 L168,11 L168,64 L161,64 Z" fill="#1e2650"/>
<rect x="110" y="79" width="58" height="15" fill="#1e2434"/>
<path d="M58,60 L106,56 L112,82 L62,86 Z" fill="#c49c84"/>
<path d="M40,94 C44,80 50,72 58,69 C70,80 96,82 108,73 C124,75 142,84 152,94 Z" fill="#263552"/>
<path d="M47,8 C45,30 49,55 62,67 C72,75 90,75 101,67 C109,57 112,40 111,20 L109,0 L52,0 Z" fill="url(#face)"/>
<ellipse cx="110.5" cy="31" rx="3.2" ry="8" fill="#d4ac94"/>
<path d="M33,0 L66,0 C57,7 52,18 50,34 C43,28 36,16 33,0 Z" fill="#2a221e"/>
<path d="M86,0 L112,0 L112,24 C108,18 102,14 96,14 C96,8 91,3 86,0 Z" fill="#2a221e"/>
<path d="M56,22 C62,18 70,19 74,22 C68,22 62,23 56,26 Z" fill="#5a4034" opacity="0.8"/>
<path d="M84,20 C90,17 98,17 104,20 C98,20 90,21 84,23 Z" fill="#5a4034" opacity="0.8"/>
<path d="M60,28 C64,27 69,27 72,29" stroke="#7a5a48" stroke-width="1.2" fill="none"/>
<path d="M87,26 C91,25 96,25 100,27" stroke="#7a5a48" stroke-width="1.2" fill="none"/>
<path d="M70,40 C73,44 79,44 82,40" stroke="#9a7460" stroke-width="1.5" fill="none"/>
<path d="M72,50 C80,46 92,46 98,49 C94,55 80,56 72,50 Z" fill="#d4968c"/>
</g>
<text x="125" y="26" text-anchor="middle" font-family="Liberation Sans" font-weight="bold" font-size="4.2" fill="#d8d8d8">ROLDAN</text>
<text x="126" y="44" text-anchor="middle" font-family="Liberation Sans" font-size="15" fill="#d0d0d0">7</text>
</g>
<rect x="2.4" y="75.2" width="85.6" height="16.6" rx="3.5" fill="rgba(28,28,28,0.9)"/>
<g fill="#fff"><rect x="3.3" y="84.5" width="1.6" height="3"/><rect x="6.3" y="82" width="1.6" height="5.5"/><rect x="9.3" y="79.5" width="1.6" height="8"/><rect x="12.3" y="77.5" width="1.6" height="10"/></g>
<path d="M18.6,78.4 L25.4,78.4 L24.5,80 L24.5,83 L26.4,85 L22.6,85 L22.3,89.3 L21.7,89.3 L21.4,85 L17.6,85 L19.5,83 L19.5,80 Z" fill="#fff"/>
<text x="33.5" y="86.8" font-family="Liberation Sans" font-size="11.2" fill="#fff" textLength="50" lengthAdjust="spacingAndGlyphs">Juan Leon</text>
</svg>
<div id="dock" class="abs" style="left:36.5px;top:774.3px;width:1207.5px;height:52.7px;border-radius:13px;border:1px solid rgba(110,120,100,0.3);background:linear-gradient(90deg,rgba(40,50,33,0.95) 0%,rgba(44,52,36,0.95) 40%,rgba(51,54,44,0.95) 55%,rgba(54,52,46,0.95) 70%,rgba(58,58,54,0.95) 88%,rgba(60,61,58,0.95) 100%)"></div>
<svg class="abs" style="left:0;top:0" width="1280" height="832"><defs>
<linearGradient id="gFinderL" x1="0" y1="0" x2="0" y2="1"><stop offset="0" stop-color="#5ec4f8"/><stop offset="1" stop-color="#2f7be6"/></linearGradient>
<linearGradient id="gFinderR" x1="0" y1="0" x2="0" y2="1"><stop offset="0" stop-color="#f6f6f8"/><stop offset="1" stop-color="#d9dde6"/></linearGradient>
<linearGradient id="gWhite" x1="0" y1="0" x2="0" y2="1"><stop offset="0" stop-color="#ffffff"/><stop offset="1" stop-color="#e9e9ec"/></linearGradient>
<linearGradient id="gGreen" x1="0" y1="0" x2="0" y2="1"><stop offset="0" stop-color="#6fdc6a"/><stop offset="1" stop-color="#38b63a"/></linearGradient>
<linearGradient id="gBlue" x1="0" y1="0" x2="0" y2="1"><stop offset="0" stop-color="#4fb6f8"/><stop offset="1" stop-color="#2468e0"/></linearGradient>
<linearGradient id="gOrange" x1="0" y1="0" x2="0" y2="1"><stop offset="0" stop-color="#f9b548"/><stop offset="1" stop-color="#f08a22"/></linearGradient>
<linearGradient id="gMusic" x1="0" y1="0" x2="0" y2="1"><stop offset="0" stop-color="#f5606f"/><stop offset="1" stop-color="#e43a4f"/></linearGradient>
<linearGradient id="gGray" x1="0" y1="0" x2="0" y2="1"><stop offset="0" stop-color="#d6d8da"/><stop offset="1" stop-color="#9c9ea2"/></linearGradient>
<linearGradient id="gZoom" x1="0" y1="0" x2="0" y2="1"><stop offset="0" stop-color="#2f6ff0"/><stop offset="1" stop-color="#1b4fd0"/></linearGradient>
<linearGradient id="gBrown" x1="0" y1="0" x2="0" y2="1"><stop offset="0" stop-color="#b08a52"/><stop offset="1" stop-color="#9a7442"/></linearGradient>
<linearGradient id="gTV" x1="0" y1="0" x2="0" y2="1"><stop offset="0" stop-color="#283030"/><stop offset="1" stop-color="#0e1212"/></linearGradient>
<linearGradient id="gFolder" x1="0" y1="0" x2="0" y2="1"><stop offset="0" stop-color="#7ccdf6"/><stop offset="1" stop-color="#4fb0ec"/></linearGradient>
<linearGradient id="gTrash" x1="0" y1="0" x2="0" y2="1"><stop offset="0" stop-color="#b4b4b6"/><stop offset="1" stop-color="#7c7c80"/></linearGradient>
<linearGradient id="gPhone" x1="0" y1="0" x2="1" y2="1"><stop offset="0" stop-color="#f4a89a"/><stop offset="0.5" stop-color="#e9c9c0"/><stop offset="0.55" stop-color="#3c86b8"/><stop offset="1" stop-color="#1a3c66"/></linearGradient>
<clipPath id="cIcon"><rect x="0" y="0" width="32.4" height="32.4" rx="7.2"/></clipPath>
</defs><g transform="translate(44.1,782.3)"><rect x="0" y="0" width="32.4" height="32.4" rx="7.2" fill="url(#gFinderR)" /><path d="M0,7.2 A7.2,7.2 0 0 1 7.2,0 L17.5,0 C15,6 13.5,12 13.2,17.5 L17,17.5 C16.8,23 17.5,28 19.5,32.4 L7.2,32.4 A7.2,7.2 0 0 1 0,25.2 Z" fill="url(#gFinderL)"/><rect x="8.5" y="9.5" width="1.4" height="3.4" rx="0.7" fill="#1d2a3a"/><rect x="23.2" y="9.5" width="1.4" height="3.4" rx="0.7" fill="#1d2a3a"/><path d="M6.5,21.5 C12,26.5 20.5,26.5 26,21.5" stroke="#1d2a3a" stroke-width="1.1" fill="none"/></g>
<g transform="translate(87.2,782.3)"><rect x="0" y="0" width="32.4" height="32.4" rx="7.2" fill="#c4c4bf" /><rect x="5.2" y="5.6" width="6.2" height="6.2" rx="1.4" fill="#5fd657"/><rect x="13.2" y="5.6" width="6.2" height="6.2" rx="1.4" fill="#f7c545"/><rect x="21.2" y="5.6" width="6.2" height="6.2" rx="1.4" fill="#f29a36"/><rect x="5.2" y="13.5" width="6.2" height="6.2" rx="1.4" fill="#e0453b"/><rect x="13.2" y="13.5" width="6.2" height="6.2" rx="1.4" fill="#b0b4b8"/><rect x="21.2" y="13.5" width="6.2" height="6.2" rx="1.4" fill="#f25869"/><rect x="5.2" y="21.4" width="6.2" height="6.2" rx="1.4" fill="#a34fdc"/><rect x="13.2" y="21.4" width="6.2" height="6.2" rx="1.4" fill="#3a9ef2"/><rect x="21.2" y="21.4" width="6.2" height="6.2" rx="1.4" fill="#54d3b0"/></g>
<g transform="translate(130.3,782.3)"><rect x="0" y="0" width="32.4" height="32.4" rx="7.2" fill="url(#gWhite)" /><g transform="translate(16.2,16.2)"><path d="M0,-13.8 A13.8,13.8 0 0 1 11.95,-6.9 L0,-6.9 Z M0,-13.8 A13.8,13.8 0 0 0 -11.95,-6.9 L-5.98,3.45 L0,-6.9 Z" fill="#de4637"/><circle r="13.8" fill="#f1b62a"/><path d="M-11.95,-6.9 A13.8,13.8 0 0 0 0,13.8 L5.98,3.45 L-5.98,3.45 Z" fill="#34a15a"/><path d="M-11.95,-6.9 A13.8,13.8 0 0 1 11.95,-6.9 L0,-6.9 L-5.98,3.45 Z" fill="#de4637"/><path d="M-11.95,-6.9 L-5.98,3.45 L0,13.8 A13.8,13.8 0 0 1 -11.95,-6.9 Z" fill="#34a15a"/><circle r="6.6" fill="#fff"/><circle r="5.2" fill="#3d7ce8"/></g></g>
<g transform="translate(173.4,782.3)"><rect x="0" y="0" width="32.4" height="32.4" rx="7.2" fill="url(#gWhite)" /><circle cx="16.2" cy="16.2" r="13.8" fill="#3b8ff0"/><circle cx="16.2" cy="16.2" r="12" fill="none" stroke="#8cc4ff" stroke-width="0.6" stroke-dasharray="0.5 1.2"/><path d="M25,7.4 L17.6,17.6 L14.8,14.8 Z" fill="#e8453c"/><path d="M7.4,25 L14.8,14.8 L17.6,17.6 Z" fill="#f2f2f2"/></g>
<g transform="translate(216.5,782.3)"><rect x="0" y="0" width="32.4" height="32.4" rx="7.2" fill="#e9ecea" /><g clip-path="url(#cIcon)"><path d="M0,0 L11,0 L11,11 L0,14 Z" fill="#7bd46a"/><path d="M20,0 L32.4,0 L32.4,24 L24,20 L20,12 Z" fill="#6fcf66"/><path d="M0,20 L8,22 L10,32.4 L0,32.4 Z" fill="#e57bc8"/><path d="M20,26 L32.4,24 L32.4,32.4 L22,32.4 Z" fill="#f2cc40"/><rect x="12" y="0" width="5.5" height="14" fill="#3a82f0"/><circle cx="31" cy="4" r="6" fill="none" stroke="#c7c7c7" stroke-width="2.5"/><circle cx="14.8" cy="19.8" r="6.5" fill="#fff"/><circle cx="14.8" cy="19.8" r="5.4" fill="#3a82f0"/><path d="M14.8,15.8 L17.3,22.8 L14.8,21.3 L12.3,22.8 Z" fill="#fff"/></g></g>
<g transform="translate(259.6,782.3)"><rect x="0" y="0" width="32.4" height="32.4" rx="7.2" fill="url(#gWhite)" /><ellipse cx="0" cy="-7.2" rx="4.6" ry="7" fill="#f5a030" opacity="0.82" transform="translate(16.2,16.2) rotate(0)"/><ellipse cx="0" cy="-7.2" rx="4.6" ry="7" fill="#f7d030" opacity="0.82" transform="translate(16.2,16.2) rotate(45)"/><ellipse cx="0" cy="-7.2" rx="4.6" ry="7" fill="#98d048" opacity="0.82" transform="translate(16.2,16.2) rotate(90)"/><ellipse cx="0" cy="-7.2" rx="4.6" ry="7" fill="#40b070" opacity="0.82" transform="translate(16.2,16.2) rotate(135)"/><ellipse cx="0" cy="-7.2" rx="4.6" ry="7" fill="#40a0e0" opacity="0.82" transform="translate(16.2,16.2) rotate(180)"/><ellipse cx="0" cy="-7.2" rx="4.6" ry="7" fill="#6a6ad8" opacity="0.82" transform="translate(16.2,16.2) rotate(225)"/><ellipse cx="0" cy="-7.2" rx="4.6" ry="7" fill="#b060c8" opacity="0.82" transform="translate(16.2,16.2) rotate(270)"/><ellipse cx="0" cy="-7.2" rx="4.6" ry="7" fill="#e84840" opacity="0.82" transform="translate(16.2,16.2) rotate(315)"/></g>
<g transform="translate(302.7,782.3)"><rect x="0" y="0" width="32.4" height="32.4" rx="7.2" fill="url(#gGreen)" /><rect x="6" y="10.5" width="14.5" height="11.5" rx="2.8" fill="#f3f5f3"/><path d="M21.5,16.2 L27,11.5 L27,21 Z" fill="#e8ece8"/></g>
<g transform="translate(345.8,782.3)"><rect x="0" y="0" width="32.4" height="32.4" rx="7.2" fill="#fbfbfb" /><path d="M0,7.2 A7.2,7.2 0 0 1 7.2,0 L25.2,0 A7.2,7.2 0 0 1 32.4,7.2 L32.4,9.5 L0,9.5 Z" fill="#ea5350"/><text x="16.2" y="8" text-anchor="middle" font-family="Liberation Sans" font-weight="bold" font-size="6.2" fill="#fff">AUG</text><text x="16.2" y="28.6" text-anchor="middle" font-family="Liberation Sans" font-size="17" fill="#222">8</text></g>
<g transform="translate(388.9,782.3)"><rect x="0" y="0" width="32.4" height="32.4" rx="7.2" fill="url(#gBrown)" /><rect x="30.5" y="5" width="2" height="6" fill="#e5e0d8"/><rect x="30.5" y="11" width="2" height="6" fill="#5aa9e6"/><rect x="30.5" y="17" width="2" height="6" fill="#ee9a3a"/><rect x="30.5" y="23" width="2" height="5" fill="#62c35a"/><circle cx="15.5" cy="15.8" r="9.8" fill="none" stroke="#8a6a3c" stroke-width="1.1"/><circle cx="15.5" cy="13.2" r="3.6" fill="#8a6a3c"/><path d="M8.8,23 C10.5,18.5 20.5,18.5 22.2,23 A9.8,9.8 0 0 1 8.8,23 Z" fill="#8a6a3c"/></g>
<g transform="translate(432.0,782.3)"><rect x="0" y="0" width="32.4" height="32.4" rx="7.2" fill="url(#gWhite)" /><circle cx="6.5" cy="7.7" r="2.6" fill="#3b82f0"/><circle cx="6.5" cy="7.7" r="1.4" fill="none" stroke="#fff" stroke-width="0.4" opacity="0.6"/><rect x="12" y="7.3500000000000005" width="16" height="0.7" fill="#c8c8c8"/><circle cx="6.5" cy="15.7" r="2.6" fill="#e5443a"/><circle cx="6.5" cy="15.7" r="1.4" fill="none" stroke="#fff" stroke-width="0.4" opacity="0.6"/><rect x="12" y="15.35" width="16" height="0.7" fill="#c8c8c8"/><circle cx="6.5" cy="23.7" r="2.6" fill="#f0a03a"/><circle cx="6.5" cy="23.7" r="1.4" fill="none" stroke="#fff" stroke-width="0.4" opacity="0.6"/><rect x="12" y="23.349999999999998" width="16" height="0.7" fill="#c8c8c8"/></g>
<g transform="translate(475.1,782.3)"><rect x="0" y="0" width="32.4" height="32.4" rx="7.2" fill="#f3f1ea" /><path d="M0,7.2 A7.2,7.2 0 0 1 7.2,0 L25.2,0 A7.2,7.2 0 0 1 32.4,7.2 L32.4,8.8 L0,8.8 Z" fill="#f7cd3f"/><rect x="0" y="16.5" width="32.4" height="0.5" fill="#d9d6cc"/><rect x="0" y="24.5" width="32.4" height="0.5" fill="#d9d6cc"/></g>
<g transform="translate(518.2,782.3)"><rect x="0" y="0" width="32.4" height="32.4" rx="7.2" fill="#fdfdfd" /><circle cx="13.5" cy="19.5" r="7.8" fill="#ee6a4e"/><path d="M6,20 A7.8,7.8 0 0 1 13,11.8 L13,19 Z" fill="#f3a03a"/><rect x="10.8" y="4.4" width="17.3" height="17.3" rx="2" fill="#5bbef0"/><path d="M6.3,21 C8,13 12,10.5 13,16 C14,20 15.5,13 17.5,14 C19,15 19.5,19 21.5,16.5 C23,14.5 24,15 27,14" stroke="#1f3f8a" stroke-width="1.8" fill="none" stroke-linecap="round"/></g>
<g transform="translate(561.3,782.3)"><rect x="0" y="0" width="32.4" height="32.4" rx="7.2" fill="url(#gTV)" /><path d="M9.2,12 C7.2,12 5.8,13.6 5.8,15.8 C5.8,18.6 7.6,21.2 9,21.2 C9.7,21.2 10,20.8 10.9,20.8 C11.8,20.8 12,21.2 12.8,21.2 C14,21.2 15,19.2 15.4,18 C14.2,17.4 13.6,16.4 13.6,15.2 C13.6,14.2 14.1,13.3 14.9,12.8 C14.3,12 13.4,11.9 12.6,11.9 C11.6,11.9 11,12.4 10.6,12.4 C10.1,12.4 9.7,12 9.2,12 Z M12.6,9 C12.8,10 12,11.3 10.8,11.4 C10.6,10.4 11.4,9.2 12.6,9 Z" fill="#fff"/><path d="M17.8,11 L17.8,13.4 L16.4,13.4 L16.4,15 L17.8,15 L17.8,19 C17.8,20.6 18.6,21.2 20,21.2 L21,21.2 L21,19.6 L20.4,19.6 C19.8,19.6 19.6,19.3 19.6,18.8 L19.6,15 L21,15 L21,13.4 L19.6,13.4 L19.6,11 Z M21.2,13.4 L23.9,21.2 L25.6,21.2 L28.3,13.4 L26.4,13.4 L24.75,18.9 L23.1,13.4 Z" fill="#fff"/></g>
<g transform="translate(604.4,782.3)"><rect x="0" y="0" width="32.4" height="32.4" rx="7.2" fill="url(#gMusic)" /><path d="M12,9.5 L24.5,6.5 L24.5,21.5 A3.3,2.8 0 1 1 22.2,18.8 L22.2,11 L14.3,12.8 L14.3,24.5 A3.3,2.8 0 1 1 12,21.8 Z" fill="#fff"/></g>
<g transform="translate(647.5,782.3)"><rect x="0" y="0" width="32.4" height="32.4" rx="7.2" fill="#fcfcfc" /><path d="M7,5.5 L12.5,5.5 L25.5,19.5 L25.5,26.5 Z" fill="#ea4b5c"/><path d="M7,9 L7,26.5 L19.5,26.5 Z" fill="#ea4b5c"/><path d="M14.5,5.5 L25.5,5.5 L25.5,17 Z" fill="#ea4b5c"/></g>
<g transform="translate(690.6,782.3)"><rect x="0" y="0" width="32.4" height="32.4" rx="7.2" fill="url(#gBlue)" /><path d="M7.5,5.5 L25,5.5 L24,14 L8.5,14 Z" fill="#f4f6fa"/><rect x="8.3" y="13.2" width="16" height="1.3" fill="#c6d2e6"/><rect x="15.6" y="14.5" width="1.2" height="13" fill="#e8eef7"/><rect x="11" y="27" width="10.5" height="1.2" rx="0.6" fill="#e8eef7"/><circle cx="16.2" cy="9.6" r="2.8" fill="#f2b233"/><path d="M16.2,6.8 A2.8,2.8 0 0 1 19,9.6 L16.2,9.6 Z" fill="#e14b3b"/><path d="M13.4,9.6 A2.8,2.8 0 0 0 16.2,12.4 L16.2,9.6 Z" fill="#3aa35a"/></g>
<g transform="translate(733.7,782.3)"><rect x="0" y="0" width="32.4" height="32.4" rx="7.2" fill="url(#gGreen)" /><ellipse cx="16" cy="15.2" rx="11.8" ry="9.6" fill="#eef2ee"/><path d="M8,21 L6,26.5 L12.5,23 Z" fill="#eef2ee"/></g>
<g transform="translate(776.8,782.3)"><rect x="0" y="0" width="32.4" height="32.4" rx="7.2" fill="url(#gOrange)" /><path d="M24.6,5 C25.8,4 27.6,5.6 26.8,6.9 L12.2,25.2 L8.6,27.4 L9.8,23.4 Z" fill="#f7f7f7"/><path d="M26.8,6.9 L12.2,25.2 L8.6,27.4 L11,24.2 L25.6,6 Z" fill="#d8d8d8"/><rect x="10" y="27.4" width="17" height="0.8" fill="#f8d0a0"/></g>
<g transform="translate(819.9,782.3)"><rect x="0" y="0" width="32.4" height="32.4" rx="7.2" fill="url(#gGreen)" /><rect x="5.8" y="21" width="3.8" height="6.5" rx="0.5" fill="#f2f7f0"/><rect x="11.6" y="15.5" width="3.8" height="12" rx="0.5" fill="#f2f7f0"/><rect x="17.4" y="5.5" width="3.8" height="22" rx="0.5" fill="#f2f7f0"/><rect x="23.2" y="11" width="3.8" height="16.5" rx="0.5" fill="#f2f7f0"/></g>
<g transform="translate(863.0,782.3)"><rect x="0" y="0" width="32.4" height="32.4" rx="7.2" fill="url(#gBlue)" /><g stroke="#fff" stroke-width="2.3" stroke-linecap="round" fill="none"><path d="M18.5,6.5 L9.2,24"/><path d="M14,6.5 L23.2,24"/><path d="M7,20.2 L25.4,20.2"/></g></g>
<g transform="translate(906.1,782.3)"><rect x="0" y="0" width="32.4" height="32.4" rx="7.2" fill="url(#gGray)" /><circle cx="16.2" cy="16.2" r="13" fill="#3a3a3c"/><circle cx="16.2" cy="16.2" r="11" fill="#8a8c90"/><circle cx="16.2" cy="16.2" r="9.5" fill="#3a3a3c"/><circle cx="16.2" cy="16.2" r="7.6" fill="#7a7c80"/><g stroke="#3a3a3c" stroke-width="1.8"><path d="M16.2,16.2 L11.5,8.8"/><path d="M16.2,16.2 L24.5,16.5"/><path d="M16.2,16.2 L11.8,24"/></g><circle cx="16.2" cy="16.2" r="2.4" fill="#3a3a3c"/></g>
<g transform="translate(949.2,782.3)"><rect x="0" y="0" width="32.4" height="32.4" rx="7.2" fill="#c8c8c8" /><rect x="9.8" y="3.5" width="13" height="26" rx="2.4" fill="#444"/><rect x="10.6" y="4.3" width="11.4" height="24.4" rx="1.8" fill="url(#gPhone)"/><rect x="14.5" y="4.8" width="3.6" height="1.2" rx="0.6" fill="#222"/></g>
<g transform="translate(1011.3,782)"><circle cx="16.9" cy="16.6" r="16.6" fill="#1ed05e" opacity="0.95"/><circle cx="16.9" cy="16.6" r="16.6" fill="#43c95c"/><g stroke="#0e0e0e" stroke-linecap="round" fill="none"><path d="M6.8,12 C13,9.5 21,10 27.2,13.4" stroke-width="2.6"/><path d="M8,17 C13.5,15 20,15.6 25.5,18.4" stroke-width="2.2"/><path d="M9.2,21.6 C14,20.2 19.5,20.6 24,22.8" stroke-width="1.8"/></g></g>
<g transform="translate(1055.4,782.3)"><rect x="0" y="0" width="32.4" height="32.4" rx="7.2" fill="url(#gWhite)" /><rect x="2" y="12.5" width="28.4" height="3.6" rx="1.8" fill="#a8a8a8"/><rect x="10.6" y="6" width="11" height="16" rx="2" fill="#555"/><rect x="12.2" y="7.5" width="7.8" height="8" rx="1" fill="#333"/><rect x="15.3" y="8.5" width="1.8" height="5.5" fill="#d23a2a"/><g stroke="#777" stroke-width="0.6"><path d="M4.0,23 V28"/><path d="M7.5,24 V28"/><path d="M11.0,23 V28"/><path d="M14.5,24 V28"/><path d="M18.0,23 V28"/><path d="M21.5,24 V28"/><path d="M25.0,23 V28"/><path d="M28.5,24 V28"/></g></g>
<g transform="translate(1098.2,782.3)"><rect x="0" y="0" width="32.4" height="32.4" rx="7.2" fill="url(#gZoom)" /><text x="16.2" y="19.2" text-anchor="middle" font-family="Liberation Sans" font-size="8.4" fill="#fff" stroke="#fff" stroke-width="0.15" textLength="21" lengthAdjust="spacingAndGlyphs">zoom</text></g>
<g transform="translate(1159,781.5)"><path d="M1,6 C1,4.5 2,3.5 3.5,3.5 L12,3.5 L14,6 L31,6 C32.2,6 33,6.8 33,8 L33,31 C33,32 32.2,33 31,33 L3,33 C1.8,33 1,32.2 1,31 Z" fill="#6ac0f0"/><path d="M10,1.5 L25,1.5 L27,10 L10,10 Z" fill="#f2f2f2"/><rect x="17" y="1.5" width="2.5" height="8" fill="#888"/><path d="M1,10 C1,9 1.8,8.5 3,8.5 L31,8.5 C32.2,8.5 33,9.2 33,10.5 L33,31 C33,32.2 32.2,33 31,33 L3,33 C1.8,33 1,32.2 1,31 Z" fill="url(#gFolder)"/></g>
<g transform="translate(1206.3,781)"><path d="M0,5 L29,5 L26,33 C26,34 25,34.5 23.5,34.5 L5.5,34.5 C4,34.5 3,34 3,33 Z" fill="url(#gTrash)" opacity="0.9"/><ellipse cx="14.5" cy="5" rx="14.5" ry="3" fill="#8a8a8c"/><ellipse cx="14.5" cy="5" rx="12.5" ry="2.2" fill="#5a5a5c"/><path d="M4,4 L8,0 L12,3 L16,-0.5 L21,2.5 L25,0.5 L26,4 Z" fill="#c8c8cc"/><path d="M9,2 L13,1 L14,4 Z" fill="#e05a40"/><path d="M18,1 L22,2 L19,4 Z" fill="#4aa0e0"/></g>
<circle cx="763.3" cy="786" r="8" fill="#e5463c"/><text x="763.3" y="789.2" text-anchor="middle" font-family="Liberation Sans" font-size="9" fill="#fff" textLength="12" lengthAdjust="spacingAndGlyphs">177</text>
<rect x="997.2" y="781" width="0.8" height="37" fill="#6a6a62"/><rect x="1146" y="781" width="0.8" height="37" fill="#6a6a62"/>
<circle cx="60.2" cy="823.9" r="1.6" fill="#b9bdb2"/>
<circle cx="146.2" cy="823.9" r="1.6" fill="#b9bdb2"/>
<circle cx="189.3" cy="823.9" r="1.6" fill="#b9bdb2"/>
<circle cx="232.5" cy="823.9" r="1.6" fill="#b9bdb2"/>
<circle cx="404.9" cy="823.9" r="1.6" fill="#b9bdb2"/>
<circle cx="448.2" cy="823.9" r="1.6" fill="#b9bdb2"/>
<circle cx="490.7" cy="823.9" r="1.6" fill="#b9bdb2"/>
<circle cx="620.6" cy="823.9" r="1.6" fill="#b9bdb2"/>
<circle cx="706.9" cy="823.9" r="1.6" fill="#b9bdb2"/>
<circle cx="750.2" cy="823.9" r="1.6" fill="#b9bdb2"/>
<circle cx="793" cy="823.9" r="1.6" fill="#b9bdb2"/>
<circle cx="1028" cy="823.9" r="1.6" fill="#b9bdb2"/>
<circle cx="1114.2" cy="823.9" r="1.6" fill="#b9bdb2"/></svg>
<svg class="abs" style="left:0;top:0" width="1280" height="832" viewBox="0 0 1280 832">
<style>
.tk{font-family:"Liberation Sans",sans-serif;font-size:7.3px;fill:#2a2a2a}
.tt{font-family:"Liberation Sans",sans-serif;font-size:8.6px;fill:#2a2a2a}
</style>
<circle cx="924" cy="185" r="1.6" fill="#5fd35a"/>
<defs><linearGradient id="gl" x1="0" y1="1" x2="1" y2="0"><stop offset="0" stop-color="#8cc8bf"/><stop offset="0.5" stop-color="#6ab3b3"/><stop offset="1" stop-color="#5a97b5"/></linearGradient></defs>
<g fill="none" stroke="url(#gl)" stroke-linecap="round">
<path d="M195.7,267.7 C191,257 192,246 199,239 C205,233 211,232.5 216,232.8 C223,233 229,236.5 234.6,243.3" stroke-width="2.1"/>
<path d="M199.6,260.3 C199.8,253 203,245 209.2,240.7 C212,238.7 215.5,237.5 219.2,237.3" stroke-width="2"/>
<path d="M196,245.5 C198.5,252 202,256.5 206.5,259.7" stroke-width="1.5"/>
<path d="M203.9,237.5 C205,241 207,244.5 210.2,246.5" stroke-width="1.5"/>
<path d="M215,234.1 C215.8,236 216.8,238 218.7,239.1" stroke-width="1.3"/>
</g>
<text x="208.4" y="270.1" fill="#6a6a6e" font-family="Liberation Serif" font-size="37.8" textLength="71.8" lengthAdjust="spacingAndGlyphs">Atlas</text>
<text x="208.2" y="280.8" fill="#b9babe" font-family="Liberation Sans" font-size="10.3" textLength="72" lengthAdjust="spacing">Scholars</text>

<line x1="195.5" y1="288.4" x2="902.5" y2="288.4" stroke="#b5c8c8" stroke-width="1.2"/>
<rect x="195.5" y="295.6" width="707" height="48.9" fill="#88adaa"/>
<text x="408" y="334.8" fill="#fff" font-family="Liberation Sans" font-size="39.5" textLength="282.5" lengthAdjust="spacingAndGlyphs">Gini Histograms</text>
<line x1="318" y1="374.6" x2="820" y2="374.6" stroke="#eeeeee" stroke-width="1"/>
<rect x="457.4" y="400.4" width="19.3" height="145.9" fill="#4a70aa" stroke="#1c2b4f" stroke-width="0.9"/>
<line x1="362" y1="546.2" x2="553" y2="546.2" stroke="#666" stroke-width="0.5"/>
<rect x="610.40" y="400.50" width="9.54" height="145.80" fill="#4a70aa" stroke="#1c2b4f" stroke-width="0.9"/>
<rect x="619.94" y="429.66" width="9.54" height="116.64" fill="#4a70aa" stroke="#1c2b4f" stroke-width="0.9"/>
<rect x="629.48" y="436.95" width="9.54" height="109.35" fill="#4a70aa" stroke="#1c2b4f" stroke-width="0.9"/>
<rect x="639.02" y="444.24" width="9.54" height="102.06" fill="#4a70aa" stroke="#1c2b4f" stroke-width="0.9"/>
<rect x="648.56" y="487.98" width="9.54" height="58.32" fill="#4a70aa" stroke="#1c2b4f" stroke-width="0.9"/>
<rect x="658.10" y="495.27" width="9.54" height="51.03" fill="#4a70aa" stroke="#1c2b4f" stroke-width="0.9"/>
<rect x="667.64" y="495.27" width="9.54" height="51.03" fill="#4a70aa" stroke="#1c2b4f" stroke-width="0.9"/>
<rect x="677.18" y="502.56" width="9.54" height="43.74" fill="#4a70aa" stroke="#1c2b4f" stroke-width="0.9"/>
<rect x="686.72" y="539.01" width="9.54" height="7.29" fill="#4a70aa" stroke="#1c2b4f" stroke-width="0.9"/>
<rect x="705.80" y="539.01" width="9.54" height="7.29" fill="#4a70aa" stroke="#1c2b4f" stroke-width="0.9"/>
<rect x="724.88" y="539.01" width="9.54" height="7.29" fill="#4a70aa" stroke="#1c2b4f" stroke-width="0.9"/>
<rect x="734.42" y="531.72" width="9.54" height="14.58" fill="#4a70aa" stroke="#1c2b4f" stroke-width="0.9"/>
<rect x="772.58" y="539.01" width="9.54" height="7.29" fill="#4a70aa" stroke="#1c2b4f" stroke-width="0.9"/>
<rect x="791.66" y="539.01" width="9.54" height="7.29" fill="#4a70aa" stroke="#1c2b4f" stroke-width="0.9"/>
<line x1="610.4" y1="546.2" x2="801.1999999999999" y2="546.2" stroke="#666" stroke-width="0.5"/>
<rect x="352.4" y="392.5" width="210.2" height="153.8" fill="none" stroke="#444" stroke-width="0.9"/>
<rect x="600.6" y="392.5" width="210.0" height="153.8" fill="none" stroke="#444" stroke-width="0.9"/>
<line x1="349.8" y1="546.3" x2="352.4" y2="546.3" stroke="#444" stroke-width="0.8"/>
<text x="347" y="548.9" text-anchor="end" class="tk">0</text>
<line x1="349.8" y1="517.1" x2="352.4" y2="517.1" stroke="#444" stroke-width="0.8"/>
<text x="347" y="519.7" text-anchor="end" class="tk">20</text>
<line x1="349.8" y1="487.9" x2="352.4" y2="487.9" stroke="#444" stroke-width="0.8"/>
<text x="347" y="490.5" text-anchor="end" class="tk">40</text>
<line x1="349.8" y1="458.7" x2="352.4" y2="458.7" stroke="#444" stroke-width="0.8"/>
<text x="347" y="461.3" text-anchor="end" class="tk">60</text>
<line x1="349.8" y1="429.5" x2="352.4" y2="429.5" stroke="#444" stroke-width="0.8"/>
<text x="347" y="432.1" text-anchor="end" class="tk">80</text>
<line x1="349.8" y1="400.3" x2="352.4" y2="400.3" stroke="#444" stroke-width="0.8"/>
<text x="347" y="402.9" text-anchor="end" class="tk">100</text>
<line x1="380.9" y1="546.3" x2="380.9" y2="548.9" stroke="#444" stroke-width="0.8"/>
<text x="380.9" y="556.4" text-anchor="middle" class="tk">9.6</text>
<line x1="419.1" y1="546.3" x2="419.1" y2="548.9" stroke="#444" stroke-width="0.8"/>
<text x="419.1" y="556.4" text-anchor="middle" class="tk">9.8</text>
<line x1="457.3" y1="546.3" x2="457.3" y2="548.9" stroke="#444" stroke-width="0.8"/>
<text x="457.3" y="556.4" text-anchor="middle" class="tk">10.0</text>
<line x1="495.5" y1="546.3" x2="495.5" y2="548.9" stroke="#444" stroke-width="0.8"/>
<text x="495.5" y="556.4" text-anchor="middle" class="tk">10.2</text>
<line x1="533.7" y1="546.3" x2="533.7" y2="548.9" stroke="#444" stroke-width="0.8"/>
<text x="533.7" y="556.4" text-anchor="middle" class="tk">10.4</text>
<line x1="598" y1="546.3" x2="600.6" y2="546.3" stroke="#444" stroke-width="0.8"/>
<text x="595.2" y="548.9" text-anchor="end" class="tk">0.0</text>
<line x1="598" y1="528.1" x2="600.6" y2="528.1" stroke="#444" stroke-width="0.8"/>
<text x="595.2" y="530.7" text-anchor="end" class="tk">2.5</text>
<line x1="598" y1="509.8" x2="600.6" y2="509.8" stroke="#444" stroke-width="0.8"/>
<text x="595.2" y="512.4" text-anchor="end" class="tk">5.0</text>
<line x1="598" y1="491.6" x2="600.6" y2="491.6" stroke="#444" stroke-width="0.8"/>
<text x="595.2" y="494.2" text-anchor="end" class="tk">7.5</text>
<line x1="598" y1="473.4" x2="600.6" y2="473.4" stroke="#444" stroke-width="0.8"/>
<text x="595.2" y="476.0" text-anchor="end" class="tk">10.0</text>
<line x1="598" y1="455.2" x2="600.6" y2="455.2" stroke="#444" stroke-width="0.8"/>
<text x="595.2" y="457.8" text-anchor="end" class="tk">12.5</text>
<line x1="598" y1="436.9" x2="600.6" y2="436.9" stroke="#444" stroke-width="0.8"/>
<text x="595.2" y="439.5" text-anchor="end" class="tk">15.0</text>
<line x1="598" y1="418.7" x2="600.6" y2="418.7" stroke="#444" stroke-width="0.8"/>
<text x="595.2" y="421.3" text-anchor="end" class="tk">17.5</text>
<line x1="598" y1="400.5" x2="600.6" y2="400.5" stroke="#444" stroke-width="0.8"/>
<text x="595.2" y="403.1" text-anchor="end" class="tk">20.0</text>
<line x1="610.0" y1="546.3" x2="610.0" y2="548.9" stroke="#444" stroke-width="0.8"/>
<text x="610.0" y="556.4" text-anchor="middle" class="tk">0</text>
<line x1="646.5" y1="546.3" x2="646.5" y2="548.9" stroke="#444" stroke-width="0.8"/>
<text x="646.5" y="556.4" text-anchor="middle" class="tk">10</text>
<line x1="683.0" y1="546.3" x2="683.0" y2="548.9" stroke="#444" stroke-width="0.8"/>
<text x="683.0" y="556.4" text-anchor="middle" class="tk">20</text>
<line x1="719.6" y1="546.3" x2="719.6" y2="548.9" stroke="#444" stroke-width="0.8"/>
<text x="719.6" y="556.4" text-anchor="middle" class="tk">30</text>
<line x1="756.1" y1="546.3" x2="756.1" y2="548.9" stroke="#444" stroke-width="0.8"/>
<text x="756.1" y="556.4" text-anchor="middle" class="tk">40</text>
<line x1="792.6" y1="546.3" x2="792.6" y2="548.9" stroke="#444" stroke-width="0.8"/>
<text x="792.6" y="556.4" text-anchor="middle" class="tk">50</text>
<text x="457" y="388.2" text-anchor="middle" class="tt" textLength="106" lengthAdjust="spacingAndGlyphs">Initial Wealth Distribution</text>
<text x="705.4" y="388.2" text-anchor="middle" class="tt" textLength="104" lengthAdjust="spacingAndGlyphs">Final Wealth Distribution</text>
<text x="457.3" y="566.6" text-anchor="middle" class="tt" textLength="23.2" lengthAdjust="spacingAndGlyphs">Wealth</text>
<text x="705.5" y="566.6" text-anchor="middle" class="tt" textLength="23.2" lengthAdjust="spacingAndGlyphs">Wealth</text>
<text transform="translate(328.6,470) rotate(-90)" text-anchor="middle" class="tt" textLength="62.4" lengthAdjust="spacingAndGlyphs">Number of People</text>
<text transform="translate(574.2,470) rotate(-90)" text-anchor="middle" class="tt" textLength="62.4" lengthAdjust="spacingAndGlyphs">Number of People</text>
<text x="780.3" y="626.3" fill="#565656" font-family="Liberation Sans" font-size="12" stroke="#565656" stroke-width="0.5" textLength="115.6" lengthAdjust="spacingAndGlyphs">June 2024 - July 2024</text>
<path d="M331.2,385.6 L334.5,389 L333,389.2 L334.7,392.3 L333.6,392.8 L332.1,389.8 L331.2,390.7 Z" fill="#000" stroke="#fff" stroke-width="0.4"/>
</svg>
</body></html>
